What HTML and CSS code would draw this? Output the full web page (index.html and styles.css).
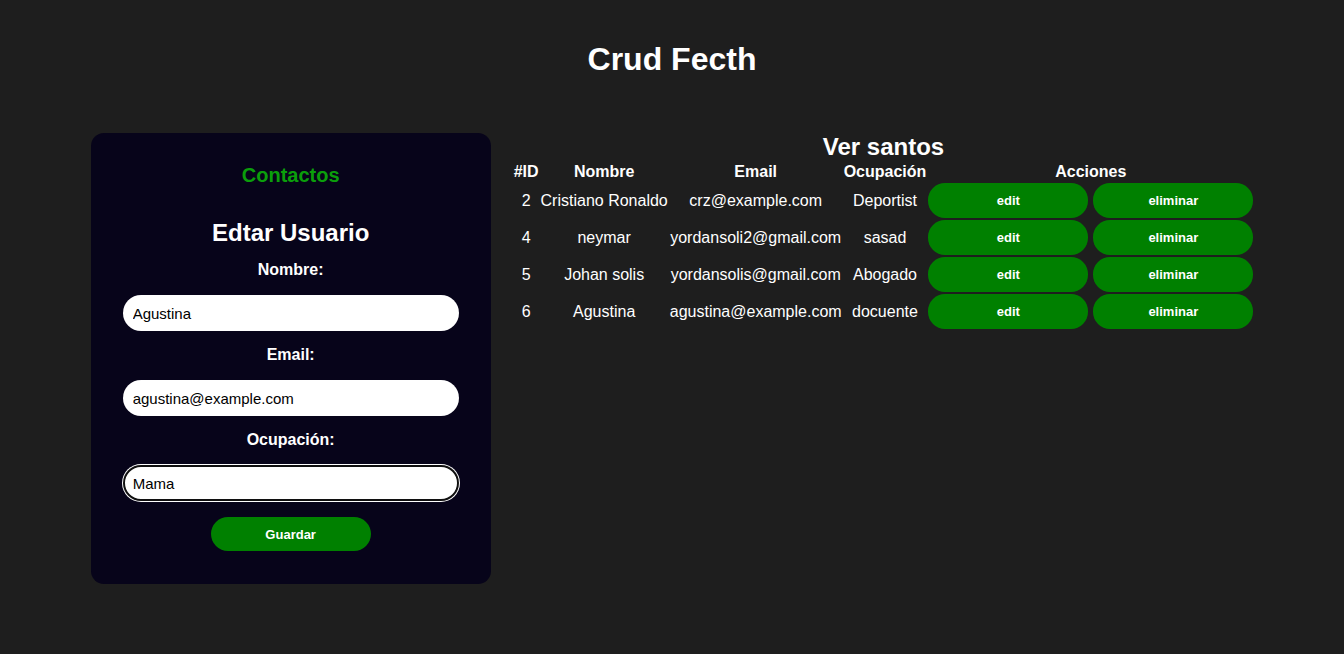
FILE: index.html
```html
<!DOCTYPE html>
<html lang="es">
<head>
<meta charset="utf-8">
<title>Crud Fecth</title>
<link rel="stylesheet" href="styles.css">
</head>
<body>
<h1 class="title">Crud Fecth</h1>
<main class="layout">
  <section class="card">
    <h3 class="card-brand">Contactos</h3>
    <h2 class="card-title">Edtar Usuario</h2>
    <label class="field-label" for="nombre">Nombre:</label>
    <input class="field-input" id="nombre" type="text" value="Agustina">
    <label class="field-label" for="email">Email:</label>
    <input class="field-input" id="email" type="text" value="agustina@example.com">
    <label class="field-label" for="ocupacion">Ocupación:</label>
    <input class="field-input is-focused" id="ocupacion" type="text" value="Mama">
    <button class="btn btn-save" type="button">Guardar</button>
  </section>
  <table class="data-table">
    <caption class="table-caption">Ver santos</caption>
    <thead>
      <tr>
        <th>#ID</th>
        <th>Nombre</th>
        <th>Email</th>
        <th>Ocupación</th>
        <th>Acciones</th>
      </tr>
    </thead>
    <tbody>
      <tr>
        <td>2</td>
        <td>Cristiano Ronaldo</td>
        <td>crz@example.com</td>
        <td>Deportist</td>
        <td><div class="actions"><button class="btn btn-row" type="button">edit</button><button class="btn btn-row" type="button">eliminar</button></div></td>
      </tr>
      <tr>
        <td>4</td>
        <td>neymar</td>
        <td>yordansoli2@gmail.com</td>
        <td>sasad</td>
        <td><div class="actions"><button class="btn btn-row" type="button">edit</button><button class="btn btn-row" type="button">eliminar</button></div></td>
      </tr>
      <tr>
        <td>5</td>
        <td>Johan solis</td>
        <td>yordansolis@gmail.com</td>
        <td>Abogado</td>
        <td><div class="actions"><button class="btn btn-row" type="button">edit</button><button class="btn btn-row" type="button">eliminar</button></div></td>
      </tr>
      <tr>
        <td>6</td>
        <td>Agustina</td>
        <td>agustina@example.com</td>
        <td>docuente</td>
        <td><div class="actions"><button class="btn btn-row" type="button">edit</button><button class="btn btn-row" type="button">eliminar</button></div></td>
      </tr>
    </tbody>
  </table>
</main>
</body>
</html>
```

FILE: styles.css
```css
* {
  box-sizing: border-box;
}

html,
body {
  margin: 0;
  height: 100%;
}

body {
  background: #1e1e1e;
  color: #ffffff;
  font-family: "Liberation Sans", Arial, sans-serif;
  overflow: hidden;
}

.title {
  margin: 41px 0 0;
  font-size: 32px;
  line-height: 37px;
  font-weight: bold;
  text-align: center;
}

.layout {
  display: flex;
  justify-content: center;
  align-items: flex-start;
  gap: 21px;
  margin-top: 55px;
  padding-left: 2px;
}

.card {
  width: 400px;
  flex-shrink: 0;
  background: #07041a;
  border-radius: 13px;
  padding: 31px 32px 33px;
  display: flex;
  flex-direction: column;
  align-items: center;
}

.card-brand {
  margin: 0;
  font-size: 20px;
  line-height: 23px;
  font-weight: bold;
  color: #0b9e0b;
}

.card-title {
  margin: 32px 0 0;
  font-size: 24px;
  line-height: 28px;
  font-weight: bold;
}

.field-label {
  display: block;
  margin-top: 14px;
  font-size: 16px;
  line-height: 18px;
  font-weight: bold;
}

.field-input + .field-label {
  margin-top: 15px;
}

.field-input {
  display: block;
  width: 336px;
  height: 36px;
  margin-top: 16px;
  padding: 0 10px;
  border: none;
  border-radius: 18px;
  background: #ffffff;
  color: #000000;
  font-family: "Liberation Sans", Arial, sans-serif;
  font-size: 15px;
  outline: none;
}

.field-input.is-focused {
  box-shadow: inset 0 0 0 2px #101010, 0 0 0 1px #ffffff;
}

.btn {
  border: none;
  background: #008000;
  color: #ffffff;
  font-family: "Liberation Sans", Arial, sans-serif;
  font-size: 13px;
  font-weight: bold;
  cursor: pointer;
}

.btn-save {
  width: 160px;
  height: 34px;
  margin-top: 16px;
  border-radius: 17px;
}

.data-table {
  border-spacing: 2px;
  font-size: 16px;
  white-space: nowrap;
}

.table-caption {
  font-size: 24px;
  line-height: 28px;
  font-weight: bold;
}

.data-table th {
  padding: 0;
  line-height: 18px;
  font-weight: bold;
  text-align: center;
}

.data-table td {
  padding: 0;
  line-height: 18px;
  text-align: center;
  vertical-align: middle;
}

.actions {
  display: flex;
  gap: 5px;
}

.btn-row {
  width: 160px;
  height: 35px;
  border-radius: 17px;
}
```
